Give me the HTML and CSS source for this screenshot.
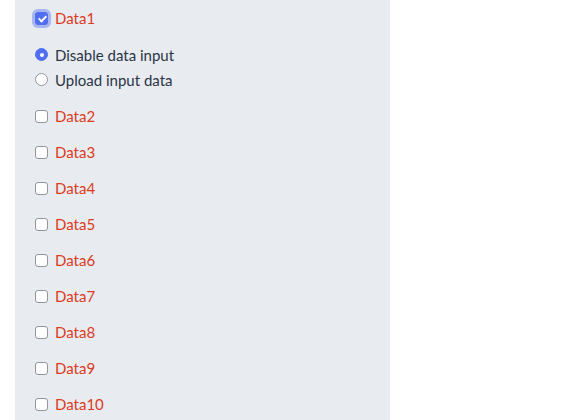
FILE: index.html
```html
<!DOCTYPE html>
<html>
<head>
<meta charset="utf-8">
<link rel="stylesheet" href="styles.css">
</head>
<body>
<div class="panel">
  <label class="row check-row"><input type="checkbox" class="cb focus" checked><span class="lbl">Data1</span></label>
  <div class="radios">
    <label class="row radio-row"><input type="radio" name="mode" class="rb" checked><span class="rlbl">Disable data input</span></label>
    <label class="row radio-row"><input type="radio" name="mode" class="rb"><span class="rlbl">Upload input data</span></label>
  </div>
  <label class="row check-row"><input type="checkbox" class="cb"><span class="lbl">Data2</span></label>
  <label class="row check-row"><input type="checkbox" class="cb"><span class="lbl">Data3</span></label>
  <label class="row check-row"><input type="checkbox" class="cb"><span class="lbl">Data4</span></label>
  <label class="row check-row"><input type="checkbox" class="cb"><span class="lbl">Data5</span></label>
  <label class="row check-row"><input type="checkbox" class="cb"><span class="lbl">Data6</span></label>
  <label class="row check-row"><input type="checkbox" class="cb"><span class="lbl">Data7</span></label>
  <label class="row check-row"><input type="checkbox" class="cb"><span class="lbl">Data8</span></label>
  <label class="row check-row"><input type="checkbox" class="cb"><span class="lbl">Data9</span></label>
  <label class="row check-row"><input type="checkbox" class="cb"><span class="lbl">Data10</span></label>
</div>
</body>
</html>
```

FILE: styles.css
```css
html, body {
  margin: 0;
  padding: 0;
  background: #ffffff;
  font-family: Lato, "Liberation Sans", sans-serif;
  overflow: hidden;
}
.panel {
  margin-left: 15px;
  width: 355px;
  min-height: 430px;
  background: #e8ecf0;
  padding: 6px 0 0 20px;
  display: flex;
  flex-direction: column;
  gap: 12px;
}
.row {
  display: flex;
  align-items: center;
}
.check-row {
  height: 24px;
}
.radios {
  display: flex;
  flex-direction: column;
}
.radio-row {
  height: 25px;
}
.lbl {
  color: #dc3a22;
  font-size: 15px;
  margin-left: 7px;
}
.rlbl {
  color: #2b3445;
  font-size: 15px;
  margin-left: 7px;
}
.cb {
  appearance: none;
  -webkit-appearance: none;
  box-sizing: border-box;
  margin: 0;
  width: 13px;
  height: 13px;
  border: 1px solid #93979c;
  border-radius: 3px;
  background: #ffffff;
  position: relative;
}
.cb:checked {
  background: #4f6ef2;
  border-color: #4f6ef2;
}
.cb:checked::after {
  content: "";
  position: absolute;
  left: 3.5px;
  top: 1px;
  width: 3px;
  height: 6px;
  border: solid #ffffff;
  border-width: 0 2px 2px 0;
  transform: rotate(45deg);
}
.cb.focus {
  box-shadow: 0 0 0 3px rgba(88, 118, 240, 0.45);
}
.rb {
  appearance: none;
  -webkit-appearance: none;
  margin: 0;
  width: 13px;
  height: 13px;
  border: 1px solid #93979c;
  border-radius: 50%;
  background: #ffffff;
  position: relative;
  box-sizing: border-box;
}
.rb:checked {
  background: #4f6ef2;
  border-color: #4f6ef2;
}
.rb:checked::after {
  content: "";
  position: absolute;
  left: 3.5px;
  top: 3.5px;
  width: 4px;
  height: 4px;
  border-radius: 50%;
  background: #ffffff;
}
```
